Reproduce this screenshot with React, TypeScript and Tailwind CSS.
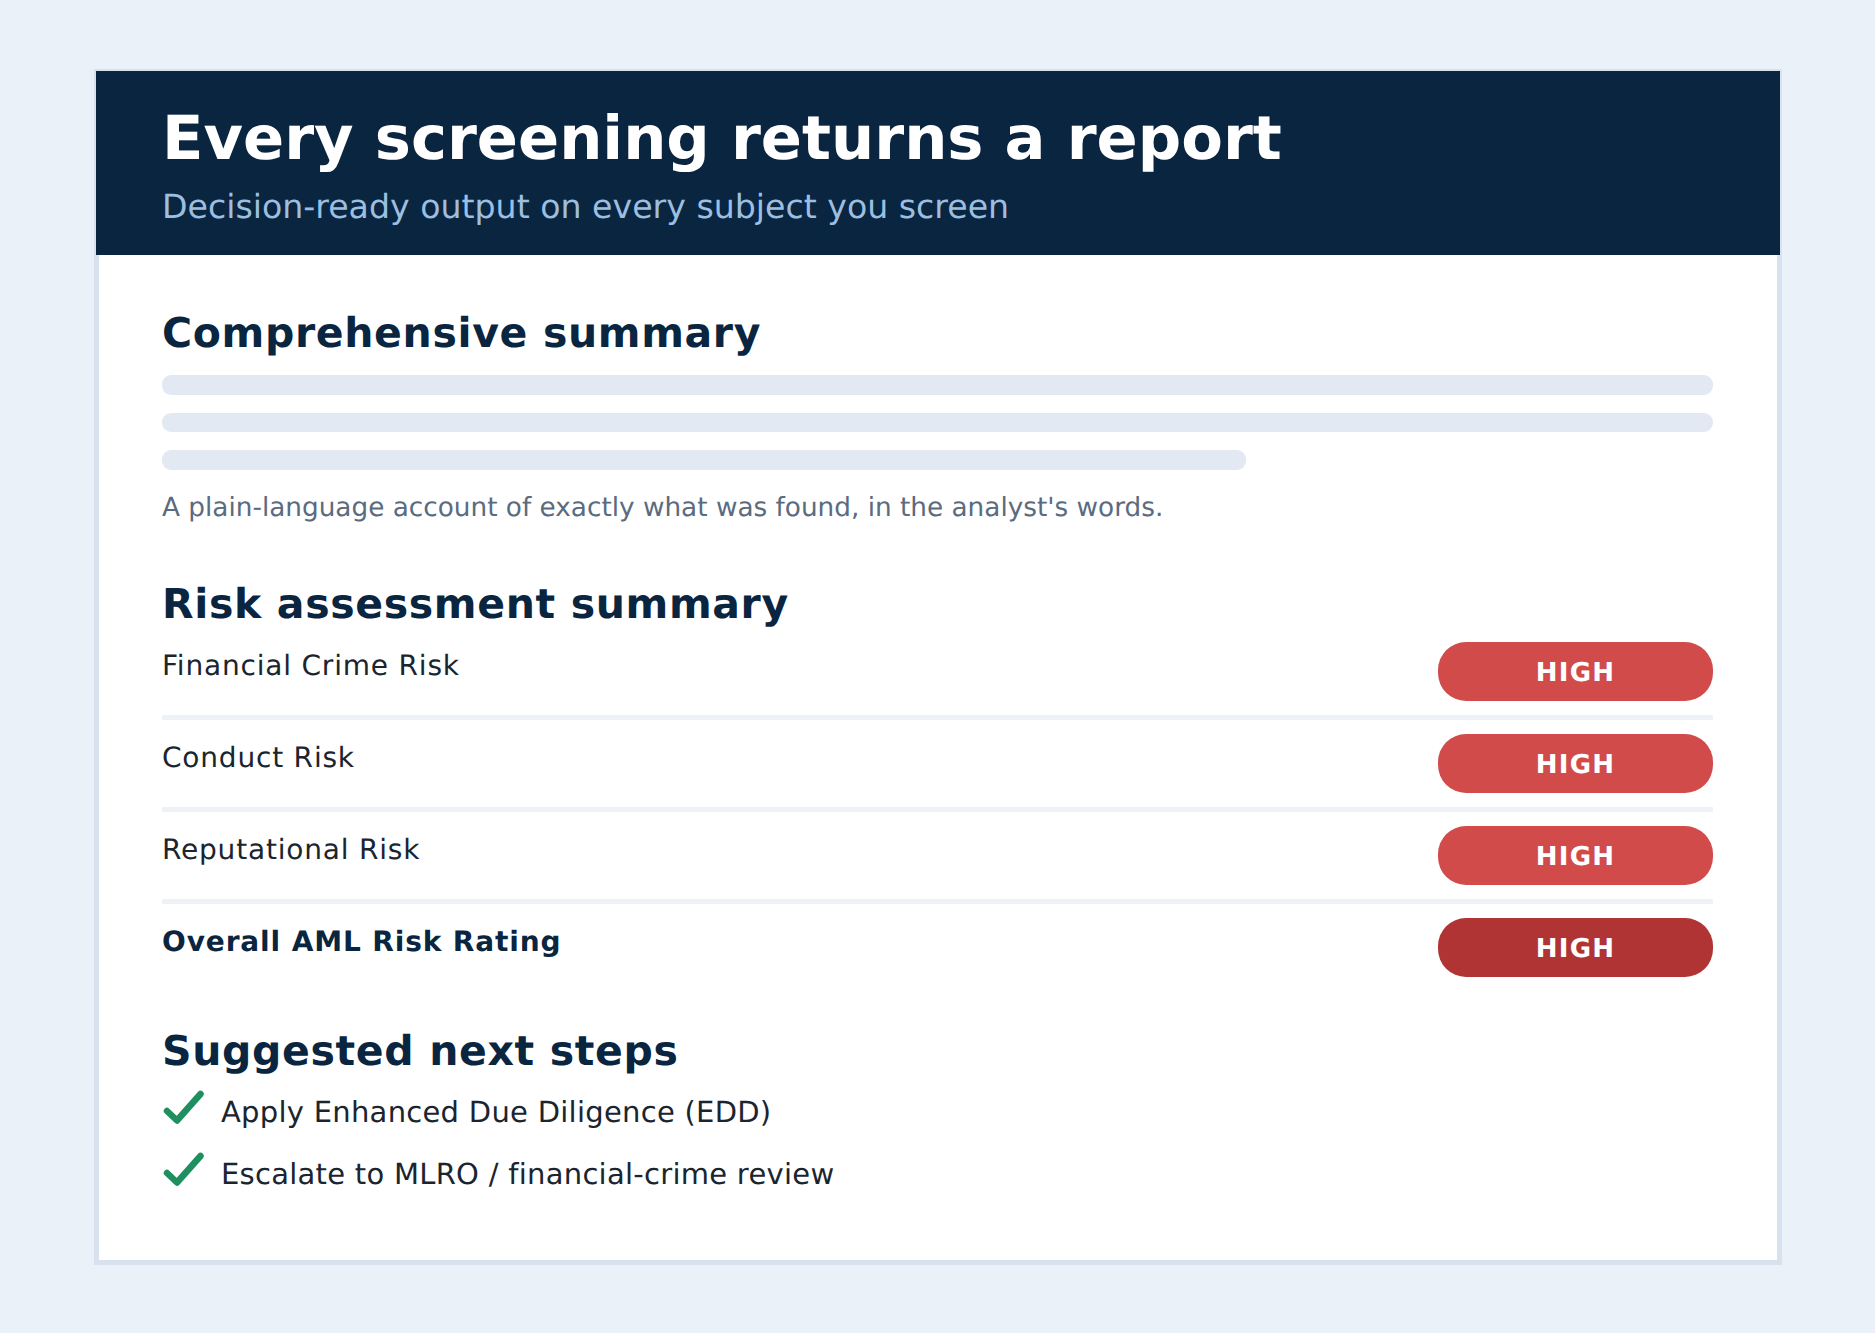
const FONT = "font-['DejaVu_Sans',sans-serif] [text-rendering:geometricPrecision]";

function Check() {
  return (
    <svg width="44" height="38" viewBox="0 0 44 38" fill="none" className="shrink-0">
      <path d="M5 21 L15 30.5 L38.5 4" stroke="#1f8f5f" strokeWidth="6.5" strokeLinecap="round" strokeLinejoin="round" />
    </svg>
  );
}

function RiskRow({ label, bold, rule }: { label: string; bold?: boolean; rule?: boolean }) {
  return (
    <div className={rule ? "border-b-[5px] border-[#eef2f7] pb-[14px] mb-[14px]" : ""}>
      <div className="flex justify-between h-[59px]">
        <div className={bold ? "text-[28px] tracking-[0.87px] leading-[48px] font-bold text-[#0a2540]" : "text-[28px] tracking-[0.8px] leading-[48px] text-[#1a2530]"}>{label}</div>
        <div className={(bold ? "bg-[#b03434]" : "bg-[#d14b4b]") + " w-[275px] rounded-[28px] pt-[5px] flex items-center justify-center text-white font-bold text-[26px] tracking-[1.2px]"}>HIGH</div>
      </div>
    </div>
  );
}

export default function App() {
  return (
    <div className={FONT + " w-[1875px] h-[1333px] bg-[#eaf1f9] pt-[69px] pl-[94px]"}>
      <div className="w-[1688px] h-[1196px] border-[5px] border-[#d8e2ee] bg-white">
        <div className="-mx-[3px] -mt-[3px] h-[184px] bg-[#0a2540] pl-[66px] pt-[33px]">
          <h1 className="text-[60.7px] leading-[70px] font-bold text-white">Every screening returns a report</h1>
          <p className="text-[33.2px] leading-[40px] mt-[13px] text-[#9cbfe0]">Decision-ready output on every subject you screen</p>
        </div>
        <div className="pl-[63px] pr-[64px] pt-[55px]">
          <h2 className="text-[41px] tracking-[0.65px] leading-[46px] font-bold text-[#0a2540]">Comprehensive summary</h2>
          <div className="mt-[19px] flex flex-col gap-[18px]">
            <div className="h-[19.5px] rounded-[9px] bg-[#e2e9f2]" />
            <div className="h-[19.5px] rounded-[9px] bg-[#e2e9f2]" />
            <div className="h-[19.5px] w-[1084px] rounded-[9px] bg-[#e2e9f2]" />
          </div>
          <p className="mt-[21px] text-[26.3px] leading-[34px] text-[#5a6b80]">A plain-language account of exactly what was found, in the analyst's words.</p>
          <h2 className="mt-[56px] text-[41px] tracking-[0.65px] leading-[46px] font-bold text-[#0a2540]">Risk assessment summary</h2>
          <div className="mt-[15px]">
            <RiskRow label="Financial Crime Risk" rule />
            <RiskRow label="Conduct Risk" rule />
            <RiskRow label="Reputational Risk" rule />
            <RiskRow label="Overall AML Risk Rating" bold />
          </div>
          <h2 className="mt-[51px] text-[41px] tracking-[0.65px] leading-[46px] font-bold text-[#0a2540]">Suggested next steps</h2>
          <div className="mt-[16px] flex flex-col gap-[24.5px] text-[29px] tracking-[0.27px] leading-[45px] text-[#1a2530]">
            <div className="flex gap-[15px] h-[38px]"><Check /><span>Apply Enhanced Due Diligence (EDD)</span></div>
            <div className="flex gap-[15px] h-[38px]"><Check /><span>Escalate to MLRO / financial-crime review</span></div>
          </div>
        </div>
      </div>
    </div>
  );
}
